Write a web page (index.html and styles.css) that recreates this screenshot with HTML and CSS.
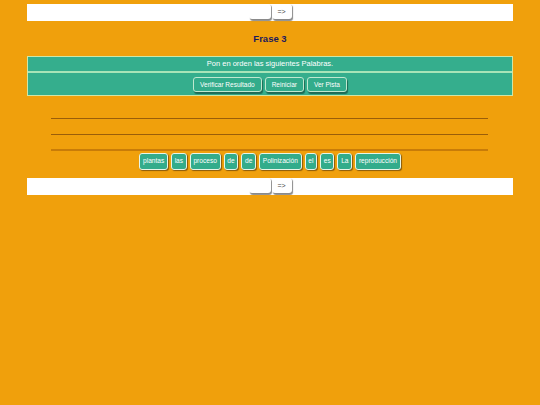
FILE: index.html
```html
<!DOCTYPE html>
<html>
<head>
<meta charset="utf-8">
<link rel="stylesheet" href="styles.css">
</head>
<body>
<div class="page">
  <div class="navbar">
    <button class="navbtn"></button>
    <button class="navbtn">=&gt;</button>
  </div>
  <h1 class="title">Frase 3</h1>
  <div class="panel">
    <div class="instr">Pon en orden las siguientes Palabras.</div>
    <div class="actions">
      <button class="act">Verificar Resultado</button>
      <button class="act">Reiniciar</button>
      <button class="act">Ver Pista</button>
    </div>
  </div>
  <div class="lines">
    <div class="line"></div>
    <div class="line"></div>
    <div class="line last"></div>
  </div>
  <div class="words">
    <span class="word">plantas</span>
    <span class="word">las</span>
    <span class="word">proceso</span>
    <span class="word">de</span>
    <span class="word">de</span>
    <span class="word">Polinización</span>
    <span class="word">el</span>
    <span class="word">es</span>
    <span class="word">La</span>
    <span class="word">reproducción</span>
  </div>
  <div class="navbar">
    <button class="navbtn"></button>
    <button class="navbtn">=&gt;</button>
  </div>
</div>
</body>
</html>
```

FILE: styles.css
```css
html, body {
  margin: 0;
  padding: 0;
  background: #f0a00c;
  font-family: "Liberation Sans", Arial, sans-serif;
}
.page {
  padding: 4px 27px 0 27px;
  display: flex;
  flex-direction: column;
}
.navbar {
  background: #ffffff;
  height: 17px;
  display: flex;
  justify-content: center;
  align-items: flex-start;
  gap: 1px;
}
.navbtn {
  box-sizing: border-box;
  width: 22px;
  height: 15px;
  margin: 0;
  padding: 0;
  border: none;
  border-radius: 3px;
  background: #fff;
  box-shadow: 1px 1.5px 1px #8a8a8a;
  font-family: "Liberation Sans", Arial, sans-serif;
  font-size: 7px;
  color: #444;
  line-height: 11px;
}
.navbtn + .navbtn { width: 20px; }
.title {
  margin: 0;
  height: 35px;
  line-height: 36px;
  text-align: center;
  font-size: 9.5px;
  font-weight: bold;
  color: #1c1a5e;
}
.panel {
  background: #35ae8d;
  border: 1px solid #cfe6a6;
  display: flex;
  flex-direction: column;
}
.instr {
  height: 14px;
  line-height: 14px;
  text-align: center;
  color: #fff;
  font-size: 7.5px;
  border-bottom: 2px solid #a8e4b8;
}
.actions {
  height: 22px;
  display: flex;
  justify-content: center;
  align-items: center;
  gap: 3px;
}
.act {
  box-sizing: border-box;
  height: 15px;
  margin: 0;
  padding: 0 6px;
  border: 1px solid #bfe8cf;
  border-radius: 3px;
  background: #33ac8b;
  color: #fff;
  font-family: "Liberation Sans", Arial, sans-serif;
  font-size: 6.5px;
  box-shadow: 1px 2px 1px #1d6a55;
}
.lines {
  margin: 22px 25px 0 24px;
  display: flex;
  flex-direction: column;
}
.line {
  height: 1px;
  background: #9a5e0a;
  margin-bottom: 15px;
}
.line + .line { margin-bottom: 14px; }
.line.last {
  height: 2px;
  background: #c87c08;
  margin-bottom: 2px;
}
.words {
  height: 25px;
  display: flex;
  justify-content: center;
  align-items: flex-start;
  gap: 3px;
}
.word {
  box-sizing: border-box;
  height: 17px;
  line-height: 14px;
  padding: 0 2.7px;
  border: 1.5px solid #e8f5e8;
  border-radius: 3px;
  background: #33ac8b;
  color: #fff;
  font-size: 6.6px;
  box-shadow: 1px 1px 1px #8a5a0a;
}
```
